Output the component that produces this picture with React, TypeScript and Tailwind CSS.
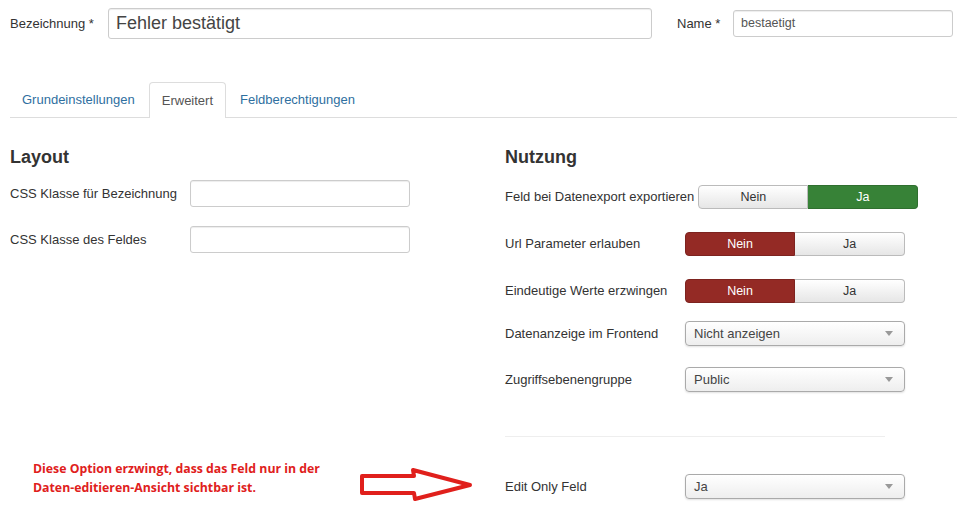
import React from "react";

const font = { fontFamily: '"Liberation Sans", Arial, sans-serif' };

function TextInput({ className = "", value = "" }: { className?: string; value?: string }) {
  return (
    <div
      className={`flex items-center rounded-[3px] border border-[#cccccc] bg-white shadow-[inset_0_1px_1px_rgba(0,0,0,0.075)] ${className}`}
    >
      {value}
    </div>
  );
}

function Toggle({ value, on }: { value: "ja" | "nein"; on: "green" | "red" }) {
  const off = "bg-gradient-to-b from-white to-[#e6e6e6] text-[#333] border-[#bbbbbb]";
  const active = on === "green" ? "bg-[#378237] text-white border-[#2f6f2f]" : "bg-[#942a25] text-white border-[#7d231f]";
  return (
    <div className="flex h-[24px] w-[220px] shrink-0 text-[12.5px]">
      <div
        className={`flex w-[110px] items-center justify-center rounded-l-[4px] border ${value === "nein" ? active : off}`}
      >
        Nein
      </div>
      <div
        className={`flex w-[110px] items-center justify-center rounded-r-[4px] border border-l-0 ${value === "ja" ? active : off}`}
      >
        Ja
      </div>
    </div>
  );
}

function Select({ value }: { value: string }) {
  return (
    <div className="flex h-[25px] w-[220px] shrink-0 items-center justify-between rounded-[4px] border border-[#aaaaaa] bg-gradient-to-b from-white to-[#eeeeee] pl-[8px] pr-[11px] text-[13px] text-[#444] shadow-[0_1px_2px_rgba(0,0,0,0.12)]">
      <span>{value}</span>
      <span className="h-0 w-0 border-x-[4px] border-t-[5px] border-x-transparent border-t-[#999]" />
    </div>
  );
}

function Row({ label, children, className = "" }: { label: string; children: React.ReactNode; className?: string }) {
  return (
    <div className={`flex items-center ${className}`}>
      <div className="mr-[4px] min-w-[176px] shrink-0 whitespace-nowrap text-[13px] text-[#333]">{label}</div>
      {children}
    </div>
  );
}

export default function App() {
  return (
    <div className="relative h-[519px] w-[957px] overflow-hidden bg-white text-[#333]" style={font}>
      {/* Title row */}
      <div className="flex items-center pt-[8px]">
        <div className="ml-[10px] w-[98px] text-[13px]">Bezeichnung *</div>
        <TextInput className="h-[31px] w-[544px] pl-[7px] text-[18px] text-[#444]" value="Fehler bestätigt" />
        <div className="ml-[25px] w-[56px] text-[13px]">Name *</div>
        <TextInput className="h-[27px] w-[220px] pl-[7px] text-[12.5px] text-[#555]" value="bestaetigt" />
      </div>

      {/* Tabs */}
      <div className="ml-[10px] mt-[43px] flex h-[36px] border-b border-[#dddddd] text-[13px]">
        <div className="mr-[2px] flex items-center px-[12px] text-[#2f6f9f]">Grundeinstellungen</div>
        <div className="-mb-px mr-[2px] flex items-center rounded-t-[4px] border border-b-0 border-[#dddddd] bg-white px-[12px] text-[#555]">
          Erweitert
        </div>
        <div className="flex items-center px-[12px] text-[#2f6f9f]">Feldberechtigungen</div>
      </div>

      <div className="flex">
        {/* Layout column */}
        <div className="ml-[10px] w-[495px] shrink-0">
          <h3 className="mt-[29px] h-[20px] text-[18px] font-bold leading-[20px] text-[#333]">Layout</h3>
          <Row label="CSS Klasse für Bezeichnung" className="mt-[13px]">
            <TextInput className="h-[27px] w-[220px]" />
          </Row>
          <Row label="CSS Klasse des Feldes" className="mt-[19px]">
            <TextInput className="h-[27px] w-[220px]" />
          </Row>
        </div>

        {/* Nutzung column */}
        <div className="flex-1">
          <h3 className="mt-[29px] h-[20px] text-[18px] font-bold leading-[20px] text-[#333]">Nutzung</h3>
          <Row label="Feld bei Datenexport exportieren" className="mt-[18px]">
            <Toggle value="ja" on="green" />
          </Row>
          <Row label="Url Parameter erlauben" className="mt-[23px]">
            <Toggle value="nein" on="red" />
          </Row>
          <Row label="Eindeutige Werte erzwingen" className="mt-[23px]">
            <Toggle value="nein" on="red" />
          </Row>
          <Row label="Datenanzeige im Frontend" className="mt-[18px]">
            <Select value="Nicht anzeigen" />
          </Row>
          <Row label="Zugriffsebenengruppe" className="mt-[21px]">
            <Select value="Public" />
          </Row>
          <div className="mt-[44px] h-px w-[380px] bg-[#eeeeee]" />
          <Row label="Edit Only Feld" className="mt-[37px]">
            <Select value="Ja" />
          </Row>
        </div>
      </div>

      {/* Annotation overlay */}
      <div
        className="absolute left-[33px] top-[459px] text-[12.3px] font-bold leading-[19px] text-[#e0201c]"
        style={{ fontFamily: '"Open Sans", sans-serif' }}
      >
        Diese Option erzwingt, dass das Feld nur in der
        <br />
        Daten-editieren-Ansicht sichtbar ist.
      </div>
      <svg className="absolute left-[355px] top-[465px]" width="122" height="40" viewBox="0 0 122 40">
        <path
          d="M7 11 L59 11 L58 5 L115 20 L60 34 L59 28 L7 28 Z"
          fill="none"
          stroke="#e0201c"
          strokeWidth="4"
          strokeLinejoin="round"
        />
      </svg>
    </div>
  );
}
